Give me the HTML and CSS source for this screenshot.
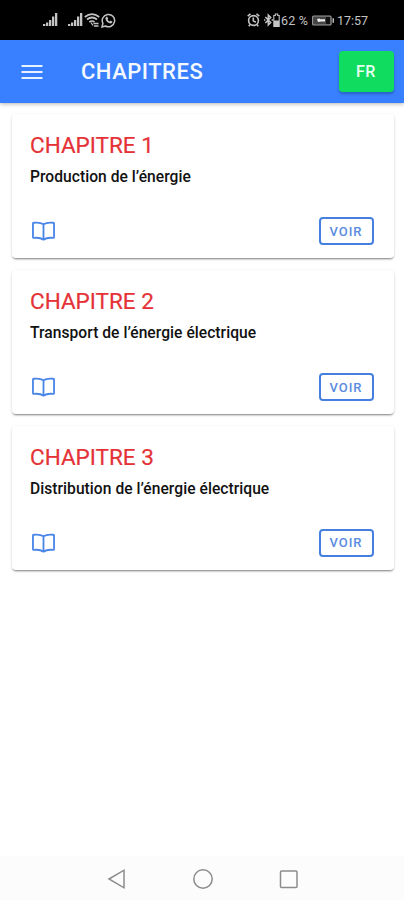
FILE: index.html
```html
<!DOCTYPE html>
<html lang="fr">
<head>
<meta charset="utf-8">
<title>Chapitres</title>
<link rel="stylesheet" href="styles.css">
</head>
<body>
<svg class="defs" width="0" height="0">
  <symbol id="signal" viewBox="0 0 15 14"><path fill="currentColor" d="M0 11h2.300v2H0zM3 9.500h2.300V13H3zM6 7h2.300v6H6zM9 3.500h2.300V13H9zM12 0h2.300v13H12z"/></symbol>
  <symbol id="book" viewBox="0 0 24 20"><path fill="none" stroke="currentColor" stroke-width="1.900" stroke-linejoin="round" d="M12 3C9.500 1.300 5.500 1 1.800 1.400Q1 1.500 1 2.300V16.300Q1 17.300 2 17.200C5.500 16.800 9.500 17.300 12 19C14.500 17.300 18.500 16.800 22 17.200Q23 17.300 23 16.300V2.300Q23 1.500 22.200 1.400C18.500 1 14.500 1.300 12 3zV19"/></symbol>
</svg>
<div class="status">
  <div class="status-left">
    <svg class="signal" width="15" height="14"><use href="#signal"/></svg>
    <svg class="signal second" width="15" height="14"><use href="#signal"/></svg>
    <svg class="wifi" width="16" height="14" viewBox="0 0 16 14" fill="none" stroke="currentColor" stroke-width="1.700"><path d="M.8 4Q8-1.800 15.200 4M3 6.500Q8 2.500 13 6.500M5.300 9Q8 7 10.500 9"/><path d="M7 9.500l2 3M9.500 10.500h5M10 13h4.500" stroke-width="1.300"/></svg>
    <svg class="whatsapp" width="15" height="15" viewBox="0 0 15 15"><path fill="none" stroke="currentColor" stroke-width="1.500" d="M1 14l.9-3.600a6.200 6.200 0 1 1 2.500 2.600z"/><path fill="currentColor" d="M5 4l1-.5 1.200 2-.6 1q.7 1.400 2 1.900l1-.8 1.900 1.100q-.4 1.900-2.100 1.800Q5 9.500 4.400 5.500z"/></svg>
  </div>
  <div class="status-right">
    <svg width="13" height="14" viewBox="0 0 13 14" fill="none" stroke="currentColor" stroke-width="1.600"><circle cx="6.500" cy="7.500" r="4.900"/><path d="M.7 3.200L3.500.9M12.300 3.200L9.500.9M6.300 4.500v3.200l2.500 1.500M3 11.500l-1.200 1.700M10 11.500l1.200 1.700"/></svg>
    <svg class="bluetooth" width="9" height="14" viewBox="0 0 9 14" fill="none" stroke="currentColor" stroke-width="1.500"><path d="M1.300 4l5.400 5.600L4.300 12V2l2.400 2.400L1.300 10M0 7h1.300M7.600 7H9"/></svg>
    <svg width="7" height="14" viewBox="0 0 7 14"><path d="M2.300 1h2.400v1.500h1.500v11H.8v-11h1.500z" fill="none" stroke="currentColor" stroke-width="1.100"/><path fill="currentColor" d="M1 7.500h5V13H1z"/></svg>
    <span class="percent">62 %</span>
    <svg class="battery" width="23" height="11" viewBox="0 0 23 11"><rect x=".6" y="1" width="18.500" height="9" rx="1" fill="#444" stroke="#999" stroke-width="1.100"/><path fill="#111" d="M14 2h4v7h-4z"/><path fill="#eee" d="M5 4l3-.500v.8h5v2.200H9L6 7z"/><path fill="#bbb" d="M20.500 3.200H22v4.600h-1.500z"/></svg>
    <span class="clock">17:57</span>
  </div>
</div>
<header class="toolbar">
  <svg class="menu" width="22" height="16" viewBox="0 0 22 16"><path stroke="currentColor" stroke-width="2" d="M.5 2H21.500M.5 8H21.500M.5 14H21.500"/></svg>
  <h1>CHAPITRES</h1>
  <button class="lang">FR</button>
</header>
<main class="list">
  <article class="card">
    <h2>CHAPITRE 1</h2>
    <p>Production de l’énergie</p>
    <div class="actions"><svg class="book" width="23" height="20"><use href="#book"/></svg><button class="view">VOIR</button></div>
  </article>
  <article class="card">
    <h2>CHAPITRE 2</h2>
    <p>Transport de l’énergie électrique</p>
    <div class="actions"><svg class="book" width="23" height="20"><use href="#book"/></svg><button class="view">VOIR</button></div>
  </article>
  <article class="card">
    <h2>CHAPITRE 3</h2>
    <p>Distribution de l’énergie électrique</p>
    <div class="actions"><svg class="book" width="23" height="20"><use href="#book"/></svg><button class="view">VOIR</button></div>
  </article>
</main>
<nav class="system">
  <svg width="20" height="22" viewBox="0 0 20 22"><path d="M2 11L17 2.200v17.600z"/></svg>
  <svg width="20" height="22" viewBox="0 0 20 22"><circle cx="10" cy="11" r="9.200"/></svg>
  <svg width="20" height="22" viewBox="0 0 20 22"><rect x="1.500" y="3" width="16.500" height="16.500" rx="1"/></svg>
</nav>
</body>
</html>
```
FILE: styles.css
```css
* { box-sizing: border-box; }
body {
  margin: 0;
  height: 900px;
  display: flex;
  flex-direction: column;
  overflow: hidden;
  background: #fff;
  font-family: Roboto, sans-serif;
}
h1, h2, p { margin: 0; font-weight: 500; white-space: nowrap; }
svg { display: block; flex: none; }
.defs { position: absolute; }
button { font-family: inherit; font-weight: 500; padding: 0; }

.status {
  height: 40px;
  flex: none;
  display: flex;
  justify-content: space-between;
  background: #000;
  color: #c4c4c4;
  padding: 0 34px 0 43px;
}
.status-left, .status-right { display: flex; align-items: center; height: 40px; }
.second { margin-left: 10px; }
.wifi { margin-left: 1px; }
.whatsapp { margin-left: 1px; }
.bluetooth { margin-left: 4px; }
.percent { margin-left: 1px; width: 29px; font-size: 12.5px; letter-spacing: .2px; white-space: nowrap; }
.battery { margin-left: 2px; }
.clock { margin-left: 2px; width: 33px; font-size: 12.5px; }

.toolbar {
  height: 63px;
  flex: none;
  display: flex;
  align-items: center;
  background: #3880ff;
  color: #f4f8ff;
  padding: 0 10px 0 21px;
  box-shadow: 0 1px 4px rgba(0, 0, 0, .3);
}
.menu { color: #e9f1ff; }
.toolbar h1 { margin-left: 38px; flex: 1; font-size: 22px; line-height: 26px; letter-spacing: .5px; }
.lang {
  width: 55px;
  height: 41px;
  border: 0;
  border-radius: 4px;
  background: #10dc60;
  color: #e6fff0;
  font-size: 16px;
  letter-spacing: .6px;
  padding-right: 1px;
  box-shadow: 0 2px 3px rgba(0, 0, 0, .25);
}

.list {
  flex: 1;
  display: flex;
  flex-direction: column;
  gap: 11.700px;
  padding: 11.400px 10.500px 0 12px;
}
.card {
  height: 144px;
  padding: 18px 20px 0 18px;
  border-radius: 4px;
  background: #fff;
  box-shadow: 0 2px 2px -1px rgba(0, 0, 0, .4), 0 1px 3px rgba(0, 0, 0, .16);
}
.card h2 { color: #e53237; font-size: 22.500px; font-weight: 400; line-height: 27px; -webkit-text-stroke: .2px #e53237; }
.card p { margin-top: 8px; color: #111; font-size: 15.600px; letter-spacing: .04px; line-height: 20px; }
.actions {
  margin-top: 30px;
  height: 28px;
  display: flex;
  justify-content: space-between;
  align-items: center;
}
.book { margin-left: 1.500px; color: #4a86e8; }
.view {
  width: 55px;
  height: 28px;
  border: 2px solid #4580e0;
  border-radius: 4px;
  background: #fff;
  color: #5b8ce0;
  font-size: 13px;
  letter-spacing: 1px;
}

.system {
  height: 44px;
  flex: none;
  display: flex;
  justify-content: center;
  align-items: center;
  gap: 66px;
  padding: 2px 0 0 1px;
  background: #fcfcfc;
}
.system svg { fill: none; stroke: #8c8c8c; stroke-width: 1.500; }
```
